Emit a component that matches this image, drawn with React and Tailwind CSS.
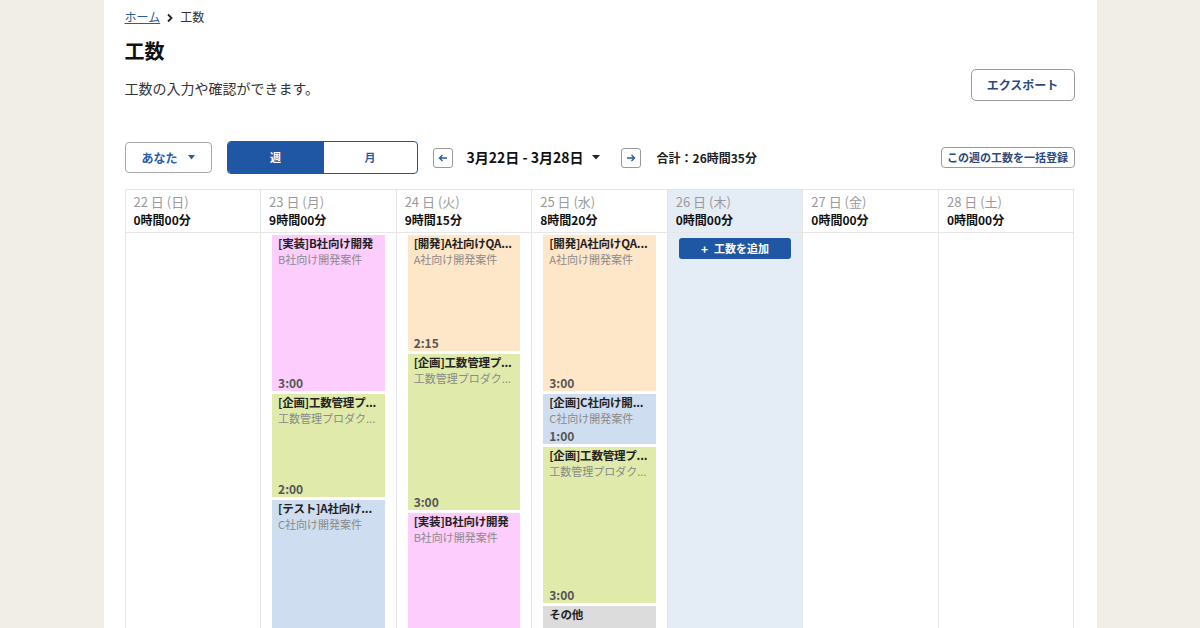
import React from "react";

const FONT = { fontFamily: '"Noto Sans CJK JP", "Noto Sans", sans-serif' };

const days = [
  { d: "22 日 (日)", t: "0時間00分", events: [] },
  {
    d: "23 日 (月)",
    t: "9時間00分",
    events: [
      { title: "[実装]B社向け開発", sub: "B社向け開発案件", time: "3:00", h: 3, c: "bg-[#fdcdfd]" },
      { title: "[企画]工数管理プ...", sub: "工数管理プロダク...", time: "2:00", h: 2, c: "bg-[#dfeaab]" },
      { title: "[テスト]A社向け...", sub: "C社向け開発案件", time: "4:00", h: 4, c: "bg-[#cfddf0]" },
    ],
  },
  {
    d: "24 日 (火)",
    t: "9時間15分",
    events: [
      { title: "[開発]A社向けQA...", sub: "A社向け開発案件", time: "2:15", h: 2.25, c: "bg-[#fee6c9]" },
      { title: "[企画]工数管理プ...", sub: "工数管理プロダク...", time: "3:00", h: 3, c: "bg-[#dfeaab]" },
      { title: "[実装]B社向け開発", sub: "B社向け開発案件", time: "4:00", h: 4, c: "bg-[#fdcdfd]" },
    ],
  },
  {
    d: "25 日 (水)",
    t: "8時間20分",
    events: [
      { title: "[開発]A社向けQA...", sub: "A社向け開発案件", time: "3:00", h: 3, c: "bg-[#fee6c9]" },
      { title: "[企画]C社向け開...", sub: "C社向け開発案件", time: "1:00", h: 1, c: "bg-[#cfddf0]" },
      { title: "[企画]工数管理プ...", sub: "工数管理プロダク...", time: "3:00", h: 3, c: "bg-[#dfeaab]" },
      { title: "その他", sub: "", time: "", h: 2, c: "bg-[#dcdcdc]" },
    ],
  },
  { d: "26 日 (木)", t: "0時間00分", events: [], today: true },
  { d: "27 日 (金)", t: "0時間00分", events: [] },
  { d: "28 日 (土)", t: "0時間00分", events: [] },
];

function Event({ e }) {
  return (
    <div
      className={`${e.c} flex flex-col px-[6px] pb-[1px] overflow-hidden shrink-0`}
      style={{ height: e.h * 53 - 3 }}
    >
      <div className="text-[11.5px] leading-[16px] font-bold text-[#222] whitespace-nowrap tracking-[-0.2px]">{e.title}</div>
      {e.sub && (
        <div className="text-[11px] leading-[17px] text-[#8a8a8a] whitespace-nowrap">{e.sub}</div>
      )}
      {e.time && e.h < 4 && (
        <div className="mt-auto text-[12px] leading-[15px] font-bold text-[#555]">{e.time}</div>
      )}
    </div>
  );
}

export default function App() {
  return (
    <div className="min-h-[628px] h-[628px] overflow-hidden bg-[#f1eee8]" style={FONT}>
      <div className="mx-auto w-[993px] h-full bg-white pl-[21px] pr-[22px]">
        <div className="pt-[8px] flex items-center gap-[6px] text-[12px] leading-[18px]">
          <span className="text-[#2a5aa8] underline">ホーム</span>
          <svg width="8" height="10" viewBox="0 0 8 10" className="mt-[1px]">
            <path d="M2 1.5 L5.5 5 L2 8.5" fill="none" stroke="#222" strokeWidth="1.8" />
          </svg>
          <span className="text-[#333]">工数</span>
        </div>
        <div className="mt-[11px] text-[20px] leading-[28px] font-bold text-[#111]">工数</div>
        <div className="flex items-end justify-between mt-[4px]">
          <div className="text-[14px] leading-[20px] text-[#333] mb-[3px]">工数の入力や確認ができます。</div>
          <button className="w-[104px] h-[32px] border border-[#9a9a9a] rounded-[5px] text-[12px] font-bold text-[#2b4a7e] bg-white">
            エクスポート
          </button>
        </div>

        <div className="mt-[40px] flex items-center">
          <button className="w-[87px] h-[31px] border border-[#a8a8a8] rounded-[4px] flex items-center justify-center gap-[10px] text-[12px] text-[#2a5aa8] font-bold bg-white">
            あなた
            <svg width="7" height="5" viewBox="0 0 7 5">
              <path d="M0 0 L7 0 L3.5 4.5 Z" fill="#2a5aa8" />
            </svg>
          </button>
          <div className="ml-[15px] w-[191px] h-[33px] border border-[#1f57a4] rounded-[4px] flex overflow-hidden">
            <div className="w-[96px] bg-[#1f57a4] text-white text-[11px] font-bold flex items-center justify-center">週</div>
            <div className="flex-1 text-[#2a5aa8] text-[11px] font-bold flex items-center justify-center">月</div>
          </div>
          <button className="ml-[15px] w-[20px] h-[20px] border border-[#9a9a9a] rounded-[3px] flex items-center justify-center bg-white">
            <svg width="10" height="10" viewBox="0 0 10 10">
              <path d="M9 5 H1.5 M4.5 2 L1.5 5 L4.5 8" fill="none" stroke="#2a5aa8" strokeWidth="1.4" />
            </svg>
          </button>
          <div className="ml-[14px] flex items-center gap-[8px] text-[14px] font-bold text-[#111]">
            3月22日 - 3月28日
            <svg width="8" height="5" viewBox="0 0 8 5">
              <path d="M0 0 L8 0 L4 4.5 Z" fill="#222" />
            </svg>
          </div>
          <button className="ml-[21px] w-[20px] h-[20px] border border-[#9a9a9a] rounded-[3px] flex items-center justify-center bg-white">
            <svg width="10" height="10" viewBox="0 0 10 10">
              <path d="M1 5 H8.5 M5.5 2 L8.5 5 L5.5 8" fill="none" stroke="#2a5aa8" strokeWidth="1.4" />
            </svg>
          </button>
          <div className="ml-[16px] text-[12px] font-bold text-[#222]">合計：26時間35分</div>
          <button className="ml-auto w-[134px] h-[21px] border border-[#9a9a9a] rounded-[4px] text-[11px] font-bold text-[#2b4a7e] bg-white">
            この週の工数を一括登録
          </button>
        </div>

        <div className="mt-[15px] border-l border-t border-[#e6e6e6] grid grid-cols-7">
          {days.map((day, i) => (
            <div key={i} className={`border-r border-[#e6e6e6] ${day.today ? "bg-[#e4ecf6]" : ""}`}>
              <div className="h-[43px] border-b border-[#e6e6e6] pl-[8px] pt-[3px]">
                <div className="text-[13px] leading-[18px] text-[#9a9a9a]">{day.d}</div>
                <div className="text-[12px] leading-[17px] font-bold text-[#111]">{day.t}</div>
              </div>
              <div className="h-[420px] px-[11px] pt-[2px] flex flex-col gap-[3px]">
                {day.today && (
                  <button className="mt-[3px] h-[21px] rounded-[3px] bg-[#1f57a4] text-white text-[11px] font-bold flex items-center justify-center gap-[6px]">
                    <span className="text-[12px]">+</span>工数を追加
                  </button>
                )}
                {day.events.map((e, j) => (
                  <Event key={j} e={e} />
                ))}
              </div>
            </div>
          ))}
        </div>
      </div>
    </div>
  );
}
